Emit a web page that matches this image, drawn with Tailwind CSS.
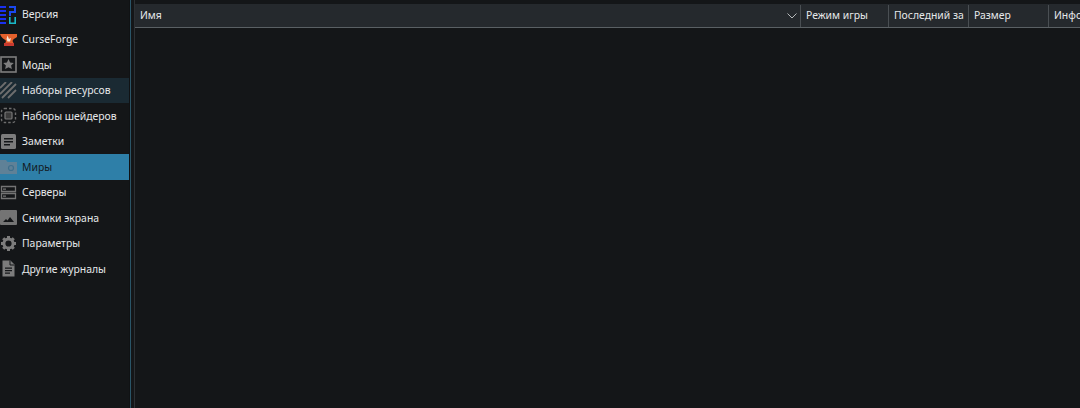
<!DOCTYPE html>
<html lang="en">
<head>
  <meta charset="UTF-8" />
  <title>Миры</title>
  <script src="https://cdn.jsdelivr.net/npm/@tailwindcss/browser@4"></script>
</head>
<body class="w-[1080px] h-[408px] overflow-hidden bg-[#141618] font-['Noto_Sans',sans-serif] text-[10.4px] text-[#e6e8ea]">
  <div class="flex h-[408px]">

    <!-- Left page list -->
    <div class="w-[129px] shrink-0 pt-px bg-[#141618]">
      <div class="flex items-center h-[25.5px] gap-[5px]">
        <svg width="17" height="22" viewBox="0 0 17 22" class="shrink-0">
          <path d="M0 3h6v2H0zM0 7h6v2H0zM0 11h6v2H0zM0 15h6v2H0zM0 19h6v2H0z" fill="#1a30f0"/>
          <path d="M9 3h7v2H9zM14 5h2v4h-2zM9 8h7v2H9zM9 10h2v3H9z" fill="#1a48f0"/>
          <path d="M9.800 14v6.200h5.400V14" fill="none" stroke="#19b8c8" stroke-width="1.600"/>
        </svg>
        <span class="mt-[2px]">Версия</span>
      </div>
      <div class="flex items-center h-[25.5px] gap-[5px]">
        <svg width="17" height="16" viewBox="0 0 17 16" class="shrink-0">
          <path d="M0 3h17v3c-2 1.500-4 2-4.500 4l1.500 3H5l1-3C5 8 2 8 0 3z" fill="#e4602c"/>
          <path d="M7.500 4.500 9 8l2-1-1 3.500H7.500L6.500 8z" fill="#f4e6d8"/>
          <path d="M4 12h10v3H4z" fill="#c83a30"/>
        </svg>
        <span class="mt-[2px]">CurseForge</span>
      </div>
      <div class="flex items-center h-[25.5px] gap-[5px]">
        <svg width="17" height="17" viewBox="0 0 17 17" class="shrink-0">
          <rect x="1" y="1" width="15" height="15" fill="none" stroke="#7e7e7e" stroke-width="1.600"/>
          <path d="M8.500 3l1.600 3.500 3.700.4-2.700 2.500.8 3.700-3.400-1.900-3.400 1.900.8-3.700-2.700-2.500 3.700-.4z" fill="#7e7e7e"/>
        </svg>
        <span class="mt-[2px]">Моды</span>
      </div>
      <div class="flex items-center h-[25.5px] gap-[5px] bg-[#1a2a33]">
        <svg width="17" height="17" viewBox="0 0 17 17" class="shrink-0">
          <path d="M0 6 6 0M0 12 12 0M2 16 16 2M8 16l8-8" fill="none" stroke="#6e6e6e" stroke-width="1.800"/>
        </svg>
        <span class="mt-[2px]">Наборы ресурсов</span>
      </div>
      <div class="flex items-center h-[25.5px] gap-[5px]">
        <svg width="17" height="17" viewBox="0 0 17 17" class="shrink-0">
          <rect x="1.500" y="1.500" width="14" height="14" rx="3" fill="none" stroke="#6e6e6e" stroke-width="1.400" stroke-dasharray="2.500 2"/>
          <rect x="5" y="5" width="7" height="7" rx="1" fill="#3c3c3c" stroke="#777" stroke-width="1.200"/>
        </svg>
        <span class="mt-[2px]">Наборы шейдеров</span>
      </div>
      <div class="flex items-center h-[25.5px] gap-[5px]">
        <svg width="17" height="17" viewBox="0 0 17 17" class="shrink-0">
          <rect x="1" y="1" width="15" height="15" rx="1.500" fill="#7c7c7c"/>
          <path d="M4 5h9v1.500H4zM4 8h9v1.500H4zM4 11h6v1.500H4z" fill="#141618"/>
        </svg>
        <span class="mt-[2px]">Заметки</span>
      </div>
      <div class="flex items-center h-[25.5px] gap-[5px] bg-[#2e7fa8] text-[#141a1f]">
        <svg width="17" height="17" viewBox="0 0 17 17" class="shrink-0">
          <path d="M0 2h6l1.500 2H17v12H0z" fill="#5f8197"/>
          <circle cx="11" cy="10" r="2.500" fill="none" stroke="#3f6f8c" stroke-width="1.200"/>
        </svg>
        <span class="mt-[2px]">Миры</span>
      </div>
      <div class="flex items-center h-[25.5px] gap-[5px]">
        <svg width="17" height="17" viewBox="0 0 17 17" class="shrink-0">
          <path d="M1.500 2.500h14v5h-14zM1.500 9.500h14v5h-14z" fill="none" stroke="#747474" stroke-width="1.300"/>
          <path d="M3 4.500h3v1.200H3zM3 11.500h3v1.200H3z" fill="#747474"/>
        </svg>
        <span class="mt-[2px]">Серверы</span>
      </div>
      <div class="flex items-center h-[25.5px] gap-[5px]">
        <svg width="17" height="17" viewBox="0 0 17 17" class="shrink-0">
          <rect y="1" width="17" height="15" rx="1" fill="#747474"/>
          <path d="M3 13l3-3 1.500 1.500L10 8l4 5z" fill="#141618"/>
        </svg>
        <span class="mt-[2px]">Снимки экрана</span>
      </div>
      <div class="flex items-center h-[25.5px] gap-[5px]">
        <svg width="17" height="17" viewBox="0 0 17 17" class="shrink-0">
          <circle cx="8.500" cy="8.500" r="4.600" fill="none" stroke="#7c7c7c" stroke-width="3"/>
          <path d="M8.500 1v3M8.500 13v3M1 8.500h3M13 8.500h3M3.200 3.200l2.100 2.100M11.700 11.700l2.100 2.100M13.800 3.200l-2.100 2.100M5.300 11.700l-2.100 2.100" stroke="#7c7c7c" stroke-width="3"/>
        </svg>
        <span class="mt-[2px]">Параметры</span>
      </div>
      <div class="flex items-center h-[25.5px] gap-[5px]">
        <svg width="17" height="17" viewBox="0 0 17 17" class="shrink-0">
          <path d="M2.500 0.500h8l4 4v12h-12z" fill="#7c7c7c"/>
          <path d="M10 .5v4.500h4.500" fill="none" stroke="#141618" stroke-width="1"/>
          <path d="M5 7.500h7v1.200H5zM5 10h7v1.200H5zM5 12.500h5v1.200H5z" fill="#141618"/>
        </svg>
        <span class="mt-[2px]">Другие журналы</span>
      </div>
    </div>

    <!-- Splitter -->
    <div class="w-px shrink-0 bg-[#101214]"></div>
    <div class="w-px shrink-0 bg-[#2a5568]"></div>
    <div class="w-[3px] shrink-0 bg-[#141618]"></div>

    <!-- Worlds table -->
    <div class="flex-1 min-w-0 border-l border-[#2c3034] pt-[4px] overflow-hidden">
      <div class="flex h-[24px] pt-px bg-[#25292d] border-b border-[#5a6064]">
        <div class="w-[666px] shrink-0 flex items-center justify-between pl-[5px] pr-[3px] border-r border-[#4a4f53]">
          <span>Имя</span>
          <svg width="10" height="6" viewBox="0 0 10 6"><path d="M.5.500 5 5 9.500.5" fill="none" stroke="#b5b8ba" stroke-width="1"/></svg>
        </div>
        <div class="w-[88px] shrink-0 flex items-center pl-[5px] border-r border-[#4a4f53]">Режим игры</div>
        <div class="w-[80px] shrink-0 flex items-center pl-[5px] border-r border-[#4a4f53] whitespace-nowrap overflow-hidden">Последний за</div>
        <div class="w-[80px] shrink-0 flex items-center pl-[5px] border-r border-[#4a4f53]">Размер</div>
        <div class="flex-1 flex items-center pl-[5px] whitespace-nowrap overflow-hidden">Инфо</div>
      </div>
    </div>
  </div>
</body>
</html>
